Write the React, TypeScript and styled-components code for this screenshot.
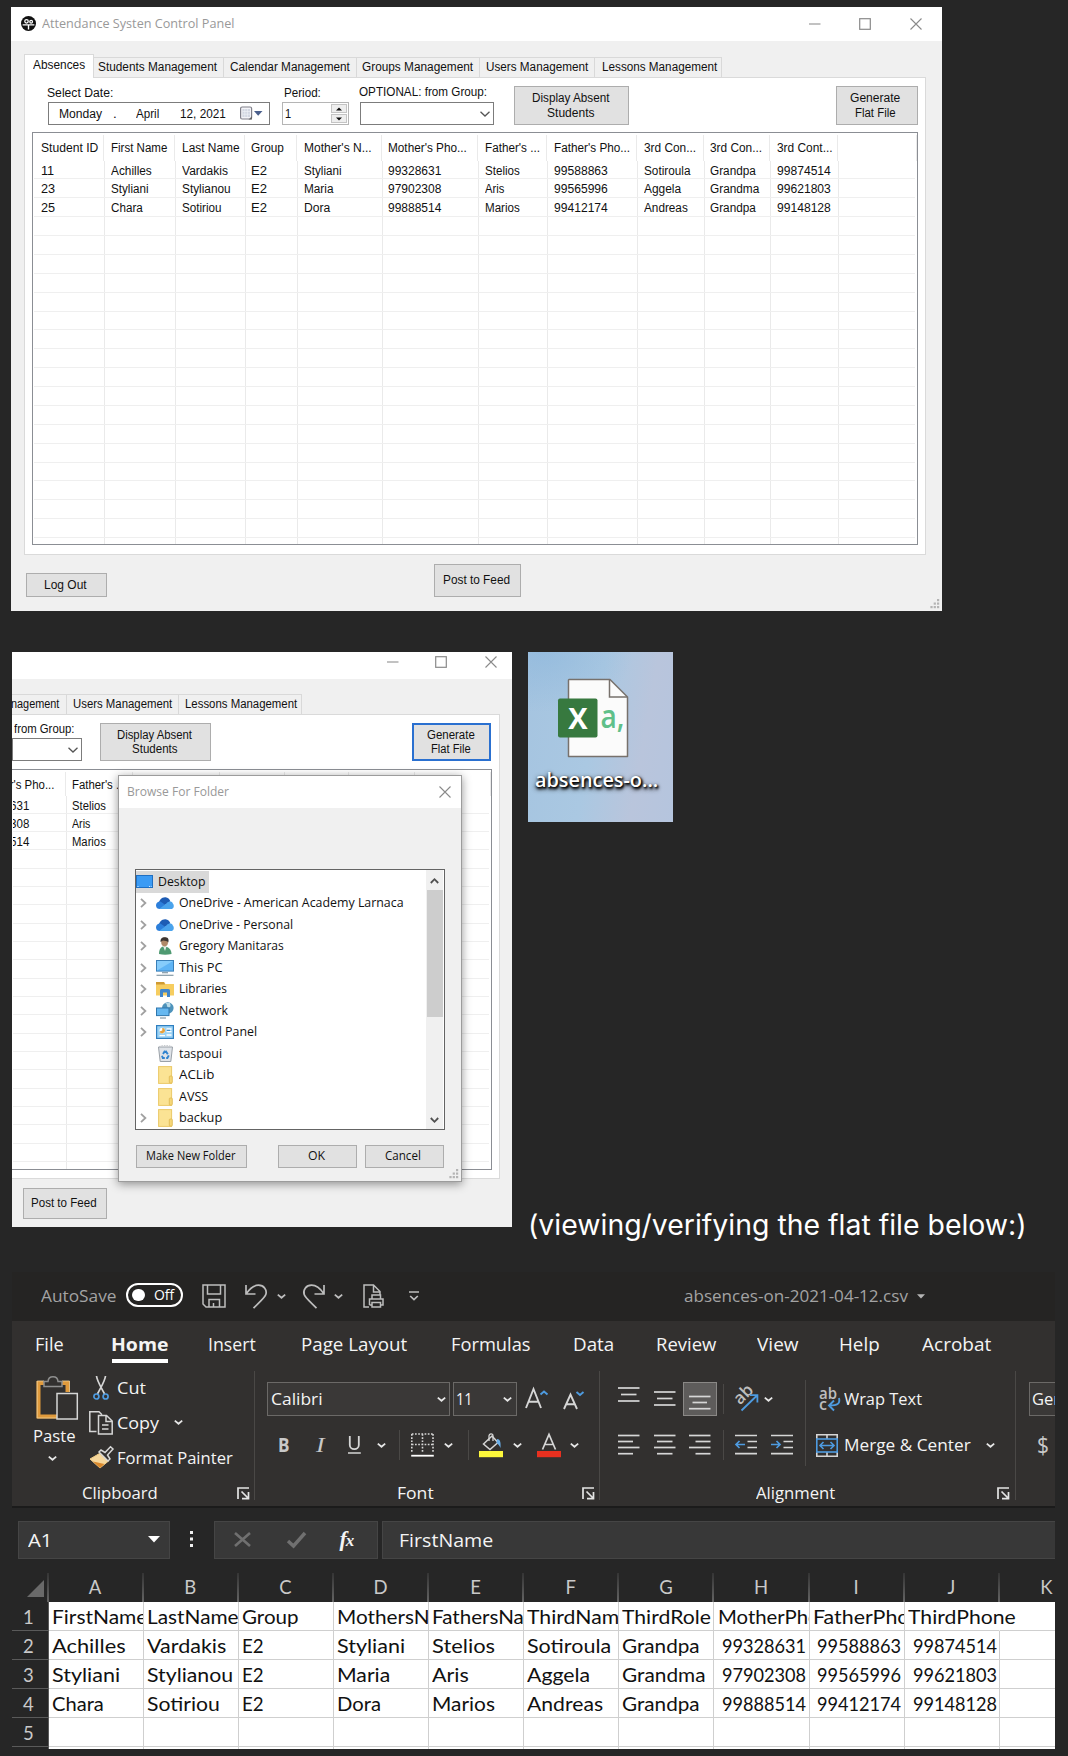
import React, { useLayoutEffect, useRef, useState } from "react";
import styled, { createGlobalStyle, css } from "styled-components";

const Global = createGlobalStyle`
  * { box-sizing: border-box; }
  html, body { margin: 0; padding: 0; background: #262626; }
  svg { display: block; flex: none; overflow: visible; }
`;

const SANS = `"Liberation Sans", Arial, sans-serif`;
const UI = `"Open Sans", "Noto Sans", sans-serif`;
const SHEET = `Lato, "Open Sans", sans-serif`;

/* ---------- text that keeps a given width ---------- */

const FitBox = styled.span<{ $w: number }>`
  display: inline-block;
  flex: none;
  width: ${(p) => p.$w}px;
  white-space: pre;
  text-align: left;
`;
const FitInner = styled.span`
  display: inline-block;
  margin-left: -0.9px;
  transform-origin: 0 50%;
`;

function T({ w, children }: { w: number; children: string }) {
  const ref = useRef<HTMLSpanElement>(null);
  const [scale, setScale] = useState(1);
  useLayoutEffect(() => {
    if (ref.current) setScale((w + 1.2) / ref.current.offsetWidth);
  }, [w, children]);
  return (
    <FitBox $w={w}>
      <FitInner ref={ref} style={{ transform: `scaleX(${scale})` }}>
        {children}
      </FitInner>
    </FitBox>
  );
}

/* ---------- page ---------- */

const Page = styled.main`
  width: 1068px;
  height: 1756px;
  padding: 7px 0 0 11px;
  overflow: hidden;
  background: #262626;
`;

const MiddleRow = styled.div`
  display: flex;
  height: 575px;
  margin: 41px 0 0 1px;
`;
const SideColumn = styled.div`
  display: flex;
  flex-direction: column;
  margin-left: 16px;
`;
const Caption = styled.p`
  margin: 385px 0 0 1px;
  font: 400 28px/36px Inter, ${SANS};
  color: #fff;
`;

/* ---------- classic window ---------- */

const Win = styled.section<{ $w: number; $h: number }>`
  position: relative;
  width: ${(p) => p.$w}px;
  height: ${(p) => p.$h}px;
  flex: none;
  overflow: hidden;
  background: #f0f0f0;
  color: #111;
  font: 12.5px/16px ${SANS};
`;
const TitleBar = styled.header<{ $h: number; $pr: number }>`
  display: flex;
  align-items: center;
  height: ${(p) => p.$h}px;
  padding: 0 ${(p) => p.$pr}px 1px 10px;
  background: #fff;
  color: #999;
  font: 12.5px/18px ${UI};
`;
const TitleText = styled.span`
  margin-left: 7px;
`;
const WinButtons = styled.div<{ $lift?: number }>`
  display: flex;
  align-items: center;
  margin-left: auto;
  padding-bottom: ${(p) => p.$lift ?? 0}px;
`;
const Tabs = styled.nav<{ $h: number; $ml: number }>`
  display: flex;
  align-items: flex-end;
  height: ${(p) => p.$h}px;
  padding-left: ${(p) => p.$ml}px;
`;
const Tab = styled.div<{ $w: number; $on?: boolean; $pl?: number }>`
  width: ${(p) => p.$w}px;
  height: 20px;
  padding-left: ${(p) => p.$pl ?? 6.5}px;
  border: 1px solid #d9d9d9;
  border-width: 1px 1px 0 0;
  overflow: hidden;
  line-height: 19px;
  ${(p) =>
    p.$on &&
    css`
      position: relative;
      height: 24px;
      margin-bottom: -1px;
      border-left-width: 1px;
      background: #fff;
      line-height: 21px;
    `}
`;
const Panel = styled.div<{ $ml: number; $w: number; $h: number }>`
  width: ${(p) => p.$w}px;
  height: ${(p) => p.$h}px;
  margin-left: ${(p) => p.$ml}px;
  border: 1px solid #dadada;
  background: #fff;
`;
const Tools = styled.div<{ $h: number }>`
  display: flex;
  align-items: flex-start;
  height: ${(p) => p.$h}px;
`;
const Field = styled.label<{ $ml: number; $pt?: number; $indent?: number }>`
  display: flex;
  flex-direction: column;
  margin-left: ${(p) => p.$ml}px;
  padding-top: ${(p) => p.$pt ?? 7}px;
  > span:first-child { margin-left: ${(p) => p.$indent ?? 0}px; }
`;
const Control = styled.div<{ $w: number; $mt?: number; $pl?: number; $light?: boolean; $h?: number }>`
  display: flex;
  align-items: center;
  width: ${(p) => p.$w}px;
  height: ${(p) => p.$h ?? 23}px;
  margin-top: ${(p) => p.$mt ?? 1}px;
  padding-left: ${(p) => p.$pl ?? 0}px;
  border: 1px solid ${(p) => (p.$light ? "#b5b5b5" : "#7c7c7c")};
  background: #fff;
`;
const Gap = styled.i<{ $w: number }>`
  flex: none;
  width: ${(p) => p.$w}px;
`;
const Spin = styled.div`
  display: flex;
  flex-direction: column;
  gap: 1px;
  width: 16px;
  height: 19px;
  margin: 0 1px 0 auto;
`;
const SpinKey = styled.div`
  display: grid;
  place-items: center;
  flex: 1;
  border: 1px solid #c4c4c4;
  background: #eee;
`;
const Button = styled.button<{ $w: number; $h: number; $ml?: number; $mt?: number; $focus?: boolean; $lh?: number }>`
  display: flex;
  flex-direction: column;
  align-items: center;
  justify-content: center;
  flex: none;
  width: ${(p) => p.$w}px;
  height: ${(p) => p.$h}px;
  margin: ${(p) => p.$mt ?? 0}px 0 0 ${(p) => p.$ml ?? 0}px;
  padding: 0 1.5px 0 0;
  border: ${(p) => (p.$focus ? "2px solid #2a70d0" : "1px solid #adadad")};
  background: #e1e1e1;
  color: #111;
  font: inherit;
  line-height: ${(p) => p.$lh ?? 14.5}px;
`;
const Footer = styled.footer`
  display: flex;
  align-items: flex-start;
`;
const GripBox = styled.div`
  position: absolute;
  right: 2px;
  bottom: 2px;
`;

/* ---------- list view ---------- */

const List = styled.div<{ $w: number; $h: number; $ml: number; $open?: boolean }>`
  width: ${(p) => p.$w}px;
  height: ${(p) => p.$h}px;
  margin-left: ${(p) => p.$ml}px;
  padding-right: 2px;
  border: 1.5px solid #8b8e94;
  border-left-width: ${(p) => (p.$open ? 0 : 1)}px;
  overflow: hidden;
`;
const ListHead = styled.div<{ $cols: string; $h: number }>`
  display: grid;
  grid-template-columns: ${(p) => p.$cols};
  height: ${(p) => p.$h}px;
  margin-top: 2px;
  line-height: 26px;
`;
const ListRow = styled.div<{ $cols: string; $h: number }>`
  display: grid;
  grid-template-columns: ${(p) => p.$cols};
  grid-template-rows: 100%;
  height: ${(p) => p.$h}px;
  margin-left: 1px;
  border-bottom: 1px solid #efefef;
  line-height: 21px;
`;
const Cell = styled.div<{ $pl: number }>`
  min-width: 0;
  padding-left: ${(p) => Math.max(p.$pl, 0)}px;
  border-right: 1px solid #eaeaea;
  overflow: hidden;
  > span { margin-left: ${(p) => Math.min(p.$pl, 0)}px; }
`;

type Txt = [string, number];
type ListProps = { cols: number[]; pads: number[]; head: Txt[]; rows: Txt[][]; total: number; headH: number; rowH: number };

function ListBody({ cols, pads, head, rows, total, headH, rowH }: ListProps) {
  const template = cols.map((c) => `${c}px`).join(" ");
  return (
    <>
      <ListHead $cols={template} $h={headH}>
        {cols.map((_, i) => (
          <Cell key={i} $pl={pads[i]}>{head[i] && <T w={head[i][1]}>{head[i][0]}</T>}</Cell>
        ))}
      </ListHead>
      {Array.from({ length: total }, (_, r) => (
        <ListRow key={r} $cols={template} $h={rowH}>
          {cols.map((_, i) => (
            <Cell key={i} $pl={pads[i] - 1}>
              {rows[r]?.[i] && <T w={rows[r][i][1]}>{rows[r][i][0]}</T>}
            </Cell>
          ))}
        </ListRow>
      ))}
    </>
  );
}

/* ---------- small drawings ---------- */

const MinIcon = () => <svg width="12" height="12"><path d="M0 6H11.5" stroke="#999" strokeWidth="1.2" /></svg>;
const MaxIcon = () => <svg width="12" height="12"><rect x="0.7" y="0.7" width="10.6" height="10.6" fill="none" stroke="#8a8a8a" strokeWidth="1.2" /></svg>;
const CloseIcon = () => <svg width="12" height="12"><path d="M.5.5L11.5 11.5M11.5.5L.5 11.5" stroke="#8a8a8a" strokeWidth="1.1" /></svg>;
const ComboArrow = () => <svg width="10" height="6"><path d="M.5.8L5 5L9.5.8" fill="none" stroke="#555" strokeWidth="1.3" /></svg>;
const Chevron = ({ c = "#e6e6e6" }: { c?: string }) => (
  <svg width="9" height="5"><path d="M.8.6L4.5 3.8L8.2.6" fill="none" stroke={c} strokeWidth="1.8" /></svg>
);
const Grip = () => (
  <svg width="10" height="10" fill="#b4b4b4">
    {[[7, 0], [3.7, 3.5], [7, 3.5], [0.4, 7], [3.7, 7], [7, 7]].map(([x, y]) => (
      <rect key={`${x}-${y}`} x={x} y={y} width="2.2" height="2.2" />
    ))}
  </svg>
);
const AppIcon = () => (
  <svg width="15" height="15" viewBox="0 0 24 24">
    <circle cx="12" cy="12" r="12" fill="#111" />
    <circle cx="8.8" cy="8.4" r="2.8" fill="none" stroke="#fff" strokeWidth="2" />
    <circle cx="16.2" cy="9" r="2.2" fill="none" stroke="#fff" strokeWidth="2" />
    <path d="M2.6 14.2H21.4M12 14.2V21.5" fill="none" stroke="#fff" strokeWidth="2.2" />
  </svg>
);
const CalendarIcon = () => (
  <svg width="23" height="15">
    <rect x="0.6" y="1" width="11" height="12" rx="1.5" fill="#f4f4f8" stroke="#80808a" strokeWidth="1.2" />
    <rect x="2.4" y="3" width="7.6" height="8" fill="#d3d7e2" />
    <path d="M2.5 5.5H10M2.5 8.2H10M4.8 3V11M7.4 3V11" stroke="#eef0f6" strokeWidth=".7" />
    <path d="M8.5 13.6L12 10.2V13.6Z" fill="#666" />
    <path d="M14 5H22.5L18.2 9.8Z" fill="#4a5f8c" />
  </svg>
);
const Triangle = ({ up }: { up?: boolean }) => (
  <svg width="6" height="4"><path d={up ? "M0 3.6L3 .4L6 3.6Z" : "M0 .4H6L3 3.6Z"} fill="#111" /></svg>
);

/* ---------- first window ---------- */

const COLS_A = [71, 71, 70, 52, 84.5, 96.7, 69, 89.7, 66.7, 66.8, 67.8, 79];
const PADS_A = [8.6, 7.8, 7.6, 7.2, 7.8, 7.8, 7.6, 7.6, 7.6, 7.4, 7.4, 0];
const HEAD_A: Txt[] = [["Student ID", 56], ["First Name", 55], ["Last Name", 56], ["Group", 32], ["Mother's N...", 66], ["Mother's Pho...", 78], ["Father's ...", 54], ["Father's Pho...", 75], ["3rd Con...", 51], ["3rd Con...", 51], ["3rd Cont...", 54]];
const ROWS_A: Txt[][] = [
  [["11", 12], ["Achilles", 39.5], ["Vardakis", 45], ["E2", 14.5], ["Styliani", 36], ["99328631", 52.5], ["Stelios", 34], ["99588863", 53], ["Sotiroula", 45], ["Grandpa", 45], ["99874514", 53]],
  [["23", 13], ["Styliani", 36], ["Stylianou", 47], ["E2", 14.5], ["Maria", 28], ["97902308", 52.5], ["Aris", 18.5], ["99565996", 53], ["Aggela", 36], ["Grandma", 48], ["99621803", 53]],
  [["25", 13], ["Chara", 30.5], ["Sotiriou", 38], ["E2", 14.5], ["Dora", 25], ["99888514", 52.5], ["Marios", 34], ["99412174", 53], ["Andreas", 43], ["Grandpa", 45], ["99148128", 53]],
];

const ControlPanel = () => (
  <Win $w={931} $h={604}>
    <TitleBar $h={34} $pr={20}>
      <AppIcon />
      <TitleText><T w={191}>Attendance Systen Control Panel</T></TitleText>
      <WinButtons><MinIcon /><Gap $w={37.5} /><MaxIcon /><Gap $w={39.5} /><CloseIcon /></WinButtons>
    </TitleBar>
    <Tabs $h={36} $ml={13}>
      <Tab $w={70} $on $pl={8.5}><T w={51}>Absences</T></Tab>
      <Tab $w={130} $pl={5}><T w={118}>Students Management</T></Tab>
      <Tab $w={132.5}><T w={118.5}>Calendar Management</T></Tab>
      <Tab $w={123.5}><T w={109.5}>Groups Management</T></Tab>
      <Tab $w={115}><T w={101}>Users Management</T></Tab>
      <Tab $w={127} $pl={7.5}><T w={114}>Lessons Management</T></Tab>
    </Tabs>
    <Panel $ml={13} $w={902} $h={478}>
      <Tools $h={54}>
        <Field $ml={23}>
          <T w={65}>Select Date:</T>
          <Control $w={222} $pl={11}>
            <T w={41.5}>Monday</T><Gap $w={12} /><T w={2}>.</T><Gap $w={21} />
            <T w={22}>April</T><Gap $w={22} /><T w={45}>12, 2021</T><Gap $w={14} />
            <CalendarIcon />
          </Control>
        </Field>
        <Field $ml={12} $indent={3}>
          <T w={36}>Period:</T>
          <Control $w={67} $light $pl={3}>
            <T w={5}>1</T>
            <Spin><SpinKey><Triangle up /></SpinKey><SpinKey><Triangle /></SpinKey></Spin>
          </Control>
        </Field>
        <Field $ml={11} $pt={6}>
          <T w={127}>OPTIONAL: from Group:</T>
          <Control $w={134} $pl={118.5} $mt={2}><ComboArrow /></Control>
        </Field>
        <Button $w={115} $h={39} $ml={20} $mt={8}>
          <T w={76.5}>Display Absent</T><T w={46}>Students</T>
        </Button>
        <Button $w={82} $h={39} $ml={206.5} $mt={8}>
          <T w={49}>Generate</T><T w={39}>Flat File</T>
        </Button>
      </Tools>
      <List $w={886} $h={413} $ml={7}>
        <ListBody cols={COLS_A} pads={PADS_A} head={HEAD_A} rows={ROWS_A} total={21} headH={25.5} rowH={18.88} />
      </List>
    </Panel>
    <Footer>
      <Button $w={81} $h={24} $ml={15} $mt={18}><T w={41}>Log Out</T></Button>
      <Button $w={87} $h={33} $ml={327} $mt={9}><T w={66}>Post to Feed</T></Button>
    </Footer>
    <GripBox><Grip /></GripBox>
  </Win>
);

/* ---------- browse dialog ---------- */

const Dialog = styled.section`
  position: absolute;
  left: 106px;
  top: 123px;
  width: 344px;
  height: 407px;
  border: 1px solid #9c9c9c;
  background: #f0f0f0;
  box-shadow: 0 2px 9px rgba(0, 0, 0, 0.42);
  font: 12.5px/16px ${UI};
  color: #111;
`;
const DialogTitle = styled.header`
  display: flex;
  align-items: center;
  justify-content: space-between;
  height: 32px;
  padding: 0 10px 0 8.5px;
  background: #fff;
  color: #999;
`;
const Tree = styled.div`
  display: flex;
  width: 310px;
  height: 261px;
  margin: 61px 0 0 16px;
  border: 1px solid #646464;
  background: #fff;
  overflow: hidden;
`;
const TreeItems = styled.div`
  flex: 1;
  padding-top: 1px;
`;
const TreeRow = styled.div`
  display: flex;
  align-items: center;
  height: 21.53px;
`;
const TreeRoot = styled(TreeRow)`
  gap: 5.5px;
  width: 73px;
  background: #d9d9d9;
`;
const Twist = styled.div`
  width: 20px;
  padding-left: 4px;
`;
const TreeIcon = styled.div`
  display: grid;
  place-items: center;
  width: 18px;
  margin-right: 5.5px;
`;
const ScrollTrack = styled.div`
  display: flex;
  flex-direction: column;
  align-items: center;
  width: 17px;
  margin-right: 1px;
  padding: 8px 0 6px;
  background: #f0f0f0;
`;
const ScrollThumb = styled.div`
  width: 16px;
  height: 127px;
  margin: 6px 0 auto;
  background: #cdcdcd;
`;
const DialogButtons = styled.div`
  display: flex;
  margin: 15px 0 0 17px;
`;

const Cloud = () => (
  <svg width="18" height="12" viewBox="0 0 18 12">
    <path d="M3 8C2 3.5 6 0 9.5 .3C12 .5 13.6 2.4 14.3 4.2L9 8Z" fill="#1d5cb4" />
    <path d="M0 8.4C0 6 2 4.5 4.4 4.6L11 9L4 12C1.6 12 0 10.6 0 8.4Z" fill="#2c7fdb" />
    <path d="M3.4 11.8L10.5 6.5C12 4 16 3.8 16.8 6.4C18.8 8.6 17.6 12 15 12H4Z" fill="#4aa3ec" />
  </svg>
);
const Person = () => (
  <svg width="14" height="18" viewBox="0 0 14 18">
    <path d="M1 17C1 12 3 9.5 6 9.5C10 9.5 13.5 12 13.5 17Q7 18.5 1 17Z" fill="#4f9a72" />
    <path d="M5 9L7 14L8.5 9.5Z" fill="#e8efe9" />
    <ellipse cx="6.6" cy="5" rx="3.4" ry="4.4" fill="#b08968" />
    <path d="M2.6 5C2 1 5 0 7.5.3C10.6.5 11 3 10.3 5.6C9.5 3.6 7 3.6 5 3.4Z" fill="#3c3531" />
  </svg>
);
const Pc = () => (
  <svg width="18" height="16" viewBox="0 0 18 16">
    <rect x=".5" y=".5" width="17" height="10.6" fill="#5fb4f5" stroke="#3a7fb8" />
    <path d="M1 10.6V1H17Z" fill="#86ccfb" />
    <path d="M6 12.8H12M.5 15.3H17.5" stroke="#6c8594" strokeWidth="1.1" />
  </svg>
);
const Libraries = () => (
  <svg width="18" height="15" viewBox="0 0 18 15">
    <path d="M0 0H8L9.5 2H18V13.5H0Z" fill="#f6cd60" />
    <path d="M0 0H8L9 2.5H0Z" fill="#cf9a32" />
    <path d="M4 15V9C4 7 5 7 6 7H12C14 7 14 8 14 9V15H11V10.5H7V15Z" fill="#3f86cc" />
  </svg>
);
const Network = () => (
  <svg width="18" height="17" viewBox="0 0 18 17">
    <circle cx="11.8" cy="6" r="5.8" fill="#4e93bb" />
    <path d="M9 1C12 2 10 5 12.5 5.5C16 5 14 2 14 1Z" fill="#b9dbe8" />
    <rect x=".5" y="6" width="12.5" height="7.6" fill="#66b8f0" stroke="#2f77ad" />
    <path d="M4 16H10" stroke="#6c8594" />
  </svg>
);
const ControlIcon = () => (
  <svg width="18" height="14" viewBox="0 0 18 14">
    <rect x=".6" y=".6" width="16.8" height="12.8" fill="#9bd3f5" stroke="#2f7fc0" strokeWidth="1.2" />
    <circle cx="6.3" cy="5.6" r="2.8" fill="#fff" />
    <path d="M6.3 5.6V2.8A2.8 2.8 0 1 1 3.6 6.4Z" fill="#e8a13a" />
    <path d="M10.5 4H15.5M10.5 6.6H15.5M3.5 10.6H9M10.5 10H15.5" stroke="#fff" strokeWidth="1.4" />
    <path d="M11 5.3H14" stroke="#2f7fc0" />
  </svg>
);
const Bin = () => (
  <svg width="15" height="17" viewBox="0 0 15 17">
    <path d="M.5 2L2.2 16.5H12.8L14.5 2Z" fill="#dfe3e8" stroke="#9aa1a8" />
    <path d="M1 1.6C4 .2 11 .2 14 1.6" fill="none" stroke="#c2c6ca" strokeDasharray="1.5 1" />
    <path d="M7.5 5.8L9.8 9.3M10.8 10.4L9.4 13H8.2M6.8 13H4.8L4 10.7M5 9L7 5.8" fill="none" stroke="#2f83cf" strokeWidth="1.9" />
  </svg>
);
const Folder = () => (
  <svg width="15" height="18" viewBox="0 0 15 18">
    <rect x=".6" y=".6" width="13" height="16.8" fill="#fbe394" stroke="#ecc968" />
    <rect x="11.3" y="10" width="3" height="7" rx=".8" fill="#f6d778" stroke="#deb750" strokeWidth=".8" />
  </svg>
);
const DesktopIcon = () => (
  <svg width="17" height="13"><rect x=".5" y=".5" width="16" height="12" fill="#3b9bf4" stroke="#1f6fc2" /><path d="M1.5 11.5H15.5" stroke="#d7ecff" strokeDasharray="1 10.5 1 .8 1" /></svg>
);

const TREE: [string, number, () => React.ReactElement, boolean][] = [
  ["OneDrive - American Academy Larnaca", 223.5, Cloud, true],
  ["OneDrive - Personal", 112.5, Cloud, true],
  ["Gregory Manitaras", 104, Person, true],
  ["This PC", 42, Pc, true],
  ["Libraries", 47, Libraries, true],
  ["Network", 48, Network, true],
  ["Control Panel", 77, ControlIcon, true],
  ["taspoui", 41.5, Bin, false],
  ["ACLib", 34, Folder, false],
  ["AVSS", 28, Folder, false],
  ["backup", 41.5, Folder, true],
];

const BrowseDialog = () => (
  <Dialog>
    <DialogTitle><T w={101}>Browse For Folder</T><CloseIcon /></DialogTitle>
    <Tree>
      <TreeItems>
        <TreeRoot><DesktopIcon /><T w={46}>Desktop</T></TreeRoot>
        {TREE.map(([name, w, Icon, open]) => (
          <TreeRow key={name}>
            <Twist>{open && <svg width="7" height="10"><path d="M1 .8L5.4 5L1 9.2" fill="none" stroke="#a0a0a0" strokeWidth="1.8" /></svg>}</Twist>
            <TreeIcon><Icon /></TreeIcon>
            <T w={w}>{name}</T>
          </TreeRow>
        ))}
      </TreeItems>
      <ScrollTrack>
        <svg width="9" height="6"><path d="M.8 5L4.5 1.2L8.2 5" fill="none" stroke="#505050" strokeWidth="1.8" /></svg>
        <ScrollThumb />
        <svg width="9" height="6"><path d="M.8 1L4.5 4.8L8.2 1" fill="none" stroke="#505050" strokeWidth="1.8" /></svg>
      </ScrollTrack>
    </Tree>
    <DialogButtons>
      <Button $w={111} $h={23}><T w={88}>Make New Folder</T></Button>
      <Button $w={79} $h={23} $ml={31}><T w={15.5}>OK</T></Button>
      <Button $w={79} $h={23} $ml={8}><T w={35}>Cancel</T></Button>
    </DialogButtons>
    <GripBox><Grip /></GripBox>
  </Dialog>
);

/* ---------- second window ---------- */

const OpenEnd = styled.div`
  margin-left: -1px;
`;
const COLS_B = [54, 66.5, 87.5, 64.5, 64.5, 66, 76];
const PADS_B = [-33.2, 7, 6, 6, 6, 6, 0];
const HEAD_B: Txt[] = [["Mother's Pho...", 75.5], ["Father's ...", 52.5]];
const ROWS_B: Txt[][] = [
  [["99328631", 50.5], ["Stelios", 33]],
  [["97902308", 50.5], ["Aris", 17.5]],
  [["99888514", 50.5], ["Marios", 33]],
];

const CroppedPanel = () => (
  <Win $w={500} $h={575}>
    <TitleBar $h={27} $pr={15.5}>
      <WinButtons $lift={6}><MinIcon /><Gap $w={36} /><MaxIcon /><Gap $w={37.5} /><CloseIcon /></WinButtons>
    </TitleBar>
    <Tabs $h={35} $ml={0}>
      <Tab $w={55} $pl={0}><T w={47.5}>nagement</T></Tab>
      <Tab $w={112}><T w={98}>Users Management</T></Tab>
      <Tab $w={123}><T w={111}>Lessons Management</T></Tab>
    </Tabs>
    <OpenEnd>
      <Panel $ml={0} $w={489} $h={465}>
        <Tools $h={53.5}>
          <Field $ml={0} $pt={6} $indent={2.5}>
            <T w={59.5}>from Group:</T>
            <Control $w={70} $pl={54.5} $mt={1} $h={23}><ComboArrow /></Control>
          </Field>
          <Button $w={111} $h={38} $ml={18} $mt={8}>
            <T w={74}>Display Absent</T><T w={44}>Students</T>
          </Button>
          <Button $w={79} $h={38} $ml={201} $mt={8} $focus $lh={14}>
            <T w={46.5}>Generate</T><T w={38}>Flat File</T>
          </Button>
        </Tools>
        <List $w={480} $h={401} $ml={0} $open>
          <ListBody cols={COLS_B} pads={PADS_B} head={HEAD_B} rows={ROWS_B} total={21} headH={24} rowH={18.33} />
        </List>
      </Panel>
    </OpenEnd>
    <Footer>
      <Button $w={84} $h={31} $ml={10.5} $mt={9}><T w={64.5}>Post to Feed</T></Button>
    </Footer>
    <BrowseDialog />
  </Win>
);

/* ---------- desktop file ---------- */

const Tile = styled.figure`
  display: flex;
  flex-direction: column;
  align-items: center;
  flex: none;
  width: 145px;
  height: 170px;
  margin: 0;
  padding: 26px 11px 0 0;
  background:
    radial-gradient(90px 60px at 10% 0%, rgba(140, 183, 220, 0.6), transparent),
    linear-gradient(100deg, #a5c4e0 0%, #aac8e2 45%, #b9c5dc 75%, #b5c5de 100%);
`;
const FileName = styled.figcaption`
  margin: 9px 0 0 4px;
  color: #fff;
  font: 600 19px/26px ${UI};
  text-shadow: 1px 2px 3px #000, 1px 1px 2px #000, 0 2px 5px #222;
`;

const DesktopFile = () => (
  <Tile>
    <svg width="84" height="80" viewBox="0 0 84 80">
      <path d="M16 1.5H57L74.5 19V78.5H15.5V2Z" fill="#fbfbfb" stroke="#77716c" strokeWidth="1.5" strokeLinejoin="round" />
      <path d="M56.5 2V19H74" fill="none" stroke="#77716c" strokeWidth="1.5" />
      <rect x="5" y="20.5" width="39.5" height="39" rx="2" fill="#37793f" />
      <text x="24.8" y="50.5" textAnchor="middle" fontFamily="Open Sans" fontWeight="700" fontSize="29" fill="#fff">X</text>
      <text x="47.5" y="49.5" fontFamily="Open Sans" fontWeight="600" fontSize="33" fill="#5fc08a" textLength="24" lengthAdjust="spacingAndGlyphs">a,</text>
    </svg>
    <FileName><T w={122}>absences-o...</T></FileName>
  </Tile>
);

/* ---------- spreadsheet ---------- */

const Excel = styled.section`
  width: 1043px;
  height: 477px;
  margin: 45px 0 0 1px;
  overflow: hidden;
  background: #262626;
  color: #f4f4f4;
  font: 17px/22px ${UI};
`;
const QuickBar = styled.header`
  display: flex;
  align-items: center;
  height: 49px;
  padding: 0 0 1px 30px;
  background: #252423;
  color: #a3a3a3;
`;
const Toggle = styled.div`
  display: flex;
  align-items: center;
  gap: 10px;
  width: 57px;
  height: 24px;
  margin: 0 18.5px 2px 10px;
  padding-left: 4px;
  border: 2px solid #fff;
  border-radius: 12px;
  color: #fff;
  font-size: 14.5px;
`;
const Knob = styled.i`
  width: 12.5px;
  height: 12.5px;
  border-radius: 50%;
  background: #fff;
`;
const Menu = styled.nav`
  display: flex;
  height: 46px;
  background: #32302f;
  font-size: 18px;
  line-height: 46px;
`;
const MenuItem = styled.div<{ $ml: number; $on?: boolean }>`
  height: 42px;
  margin-left: ${(p) => p.$ml}px;
  ${(p) =>
    p.$on &&
    css`
      font-weight: 700;
      border-bottom: 4px solid #fff;
    `}
`;
const Ribbon = styled.div`
  display: flex;
  height: 139px;
  background: #32302f;
`;
const Group = styled.div<{ $w: number }>`
  display: flex;
  flex-direction: column;
  flex: none;
  width: ${(p) => p.$w}px;
  height: 129px;
  margin-top: 4px;
  border-right: 1px solid #4a4846;
`;
const GroupBody = styled.div`
  display: flex;
  flex: none;
  height: 109px;
`;
const GroupFoot = styled.div<{ $pl: number }>`
  display: flex;
  align-items: center;
  flex: none;
  height: 26px;
  padding: 0 4.5px 0 ${(p) => p.$pl}px;
  font-size: 16px;
  > svg { margin: 0 0 0 auto; }
`;
const PasteColumn = styled.div`
  display: flex;
  flex-direction: column;
  width: 77px;
  padding: 5px 0 0 22px;
  > span { margin-top: 6px; line-height: 20px; }
  > svg:first-child { margin-left: 3px; }
  > svg:last-child { margin: 10px 0 0 14px; }
`;
const Commands = styled.div`
  display: flex;
  flex-direction: column;
  margin-top: -1px;
`;
const Command = styled.div`
  display: flex;
  align-items: center;
  flex: none;
  height: 35px;
  > svg:last-child { margin-left: 15px; }
`;
const CommandIcon = styled.div`
  display: grid;
  place-items: center;
  width: 24px;
  height: 24px;
  margin-right: 5px;
`;
const Stack = styled.div`
  display: flex;
  flex-direction: column;
`;
const ToolRow = styled.div<{ $h: number; $mt: number; $pl: number }>`
  display: flex;
  align-items: center;
  height: ${(p) => p.$h}px;
  margin-top: ${(p) => p.$mt}px;
  padding-left: ${(p) => p.$pl}px;
`;
const Picker = styled.div<{ $w: number }>`
  display: flex;
  align-items: center;
  justify-content: space-between;
  flex: none;
  width: ${(p) => p.$w}px;
  height: 34px;
  padding: 0 3.5px;
  border: 1.5px solid #6b6967;
  background: #3a3837;
`;
const Rule = styled.i<{ $h?: number }>`
  flex: none;
  width: 1px;
  height: ${(p) => p.$h ?? 30}px;
  background: #4a4846;
`;
const Glyph = styled.span<{ $size: number; $bold?: boolean; $serif?: boolean }>`
  display: block;
  color: #c8c8c8;
  font-size: ${(p) => p.$size}px;
  font-weight: ${(p) => (p.$bold ? 700 : 400)};
  line-height: 24px;
  ${(p) => p.$serif && css`font-family: "Liberation Serif", serif; font-style: italic;`}
`;
const Pressed = styled.div`
  display: grid;
  place-items: center;
  width: 34px;
  height: 34px;
  padding-top: 7px;
  border: 1.5px solid #8a8886;
  background: #5e5c5b;
`;

const S = "#d6d6d6";
const Q = "#bdbdbd";
const B = "#4e9be0";

const Lines = ({ rows }: { rows: [number, number, number][] }) => (
  <svg width="22" height="22" stroke={S} strokeWidth="1.7">
    {rows.map(([y, a, b]) => <path key={y} d={`M${a} ${y}H${b}`} />)}
  </svg>
);
const Launcher = () => (
  <svg width="13" height="13"><path d="M1 12V1H12M4.5 4.5L11 11M11.5 5V11.7H5" fill="none" stroke="#e4e4e4" strokeWidth="1.7" /></svg>
);
const SaveIcon = () => (
  <svg width="24" height="24" fill="none" stroke={Q} strokeWidth="1.5"><path d="M1 1H23V23H4L1 20ZM5.5 1V10H18.5V1M7 23V15.5H17.5V23M11.5 19V23" /></svg>
);
const UndoIcon = ({ flip }: { flip?: boolean }) => (
  <svg width="22" height="25" fill="none" stroke={Q} strokeWidth="1.7">
    <path transform={flip ? "translate(22 0) scale(-1 1)" : undefined} d="M1 1V10H10.5M1.2 9.8C5 4 9 1.2 13.5 1.2C19 1.2 22.3 6 20.8 10.5C20 13.5 14 18.5 8.5 24.2" />
  </svg>
);
const PrintIcon = () => (
  <svg width="21" height="24" fill="none" stroke={Q} strokeWidth="1.5">
    <path d="M6 23H1V1H10.5L17 7.5V11M10.5 1V8H17M9 15V11H17.5V15M6.5 21V15H20V21H17.5M9 21H6.5M9 18.5H17.5V23H9Z" />
  </svg>
);
const PasteIcon = () => (
  <svg width="41" height="44" fill="none">
    <path d="M7 7H1.5V40.5H20M24 7H30.5V16" stroke="#e09a3c" strokeWidth="4" />
    <path d="M7 5H.2V42H20M25 5H32.5V16" stroke="#f3d39a" strokeWidth=".8" />
    <path d="M7 10.5V5.5H11C11.5 -.8 20.5 -.8 21 5.5H25V10.5Z" fill="#32302f" stroke="#8e8e8e" strokeWidth="1.5" />
    <rect x="20" y="17.5" width="20.3" height="25.5" fill="#32302f" stroke={S} strokeWidth="1.5" />
  </svg>
);
const CutIcon = () => (
  <svg width="16" height="24" fill="none" strokeWidth="1.7">
    <path d="M3.5 0C4 5 8 11 11.6 18M12.5 0C12 5 8 11 4.4 18" stroke={S} />
    <circle cx="3.4" cy="20.5" r="2.5" stroke={B} /><circle cx="12.6" cy="20.5" r="2.5" stroke={B} />
  </svg>
);
const CopyIcon = () => (
  <svg width="24" height="24" fill="none" stroke={S} strokeWidth="1.5">
    <path d="M7.5 20.5H.8V.8H10L13 3.8" /><path d="M9.5 4.5H17.5L23.2 10V23H9.5ZM17 5V10.5H23M13 14H19.5M13 18H19.5" />
  </svg>
);
const PainterIcon = () => (
  <svg width="25" height="23" fill="none">
    <path d="M1 13L10.5 7.5L19.5 15L11 22Z" fill="#f6d79c" stroke="#f1cd87" />
    <path d="M4 15.5L15.5 18L11 22Z" fill="#d9882d" />
    <path d="M10 6L12 4L16 6.5L21.5 0.8L24 3L18.5 9L21 13L19 15Z" fill="#32302f" stroke={S} strokeWidth="1.5" />
  </svg>
);
const BordersIcon = () => (
  <svg width="23" height="24" fill="none" stroke={S} strokeWidth="1.6">
    <path d="M.8 1H22.5M.8 1V20M22 1V20M11.5 1V20M.8 11.5H22" strokeDasharray="1.7 1.5" /><path d="M.2 22.7H22.8" stroke="#fff" strokeWidth="1.8" />
  </svg>
);
const FillIcon = () => (
  <svg width="24" height="24" fill="none">
    <path d="M4.5 11L13 3L19 9.5L11 16.5Z" stroke={S} strokeWidth="1.5" /><path d="M10 8V3C10 .2 14 .2 14 3V8" stroke={S} strokeWidth="1.3" />
    <path d="M18 6C21 6 22 9 21.5 15C20 12 19 11 17.5 10Z" fill="#6aaee8" /><rect y="18" width="24" height="6.2" fill="#fdf73b" />
  </svg>
);
const FontColorIcon = () => (
  <svg width="24" height="24" fill="none"><path d="M5.5 16.5L12 1.5L18.5 16.5M7.6 11.5H16.4" stroke={S} strokeWidth="1.7" /><rect y="18" width="24" height="6.2" fill="#e8301f" /></svg>
);
const GrowIcon = ({ small }: { small?: boolean }) => (
  <svg width="22" height="21" fill="none" strokeWidth="1.9">
    {small ? <path d="M1 20L7.5 5.5L14 20M3.2 15.3H11.8" stroke={S} /> : <path d="M1 19L8.5 0L16 19M3.6 12.8H13.4" stroke={S} />}
    {small ? <path d="M13.5 3L17 6L20.5 3" stroke={B} /> : <path d="M15.5 5.5L19 2.5L22.5 5.5" stroke={B} />}
  </svg>
);
const OrientIcon = () => (
  <svg width="25" height="23" fill="none">
    <text x="0" y="0" transform="translate(6 17.5) rotate(-45)" fontFamily="Open Sans" fontSize="17" fontWeight="600" fill={Q}>ab</text>
    <path d="M7.5 22.5L23 7.5M16 7.2H23.4V14.5" stroke={B} strokeWidth="1.8" />
  </svg>
);
const WrapIcon = () => (
  <svg width="22" height="24" fill="none">
    <text x="0" y="11.5" fontFamily="Open Sans" fontSize="16" fontWeight="600" fill={Q} textLength="18" lengthAdjust="spacingAndGlyphs">ab</text>
    <text x="0" y="22.5" fontFamily="Open Sans" fontSize="16" fontWeight="600" fill={Q}>c</text>
    <path d="M20 11C21.5 17 18 18.5 10.5 18.5M15 13.5L10 18.5L15 23.5" stroke={B} strokeWidth="1.9" />
  </svg>
);
const MergeIcon = () => (
  <svg width="22" height="23" fill="none" strokeWidth="1.6">
    <path d="M.8 5V.8H21.2V5M11 .8V5M.8 18V22.2H21.2V18M11 18V22.2" stroke={S} />
    <rect x=".8" y="5" width="20.4" height="13" stroke={B} /><path d="M4 11.5H18M7.5 8L4 11.5L7.5 15M14.5 8L18 11.5L14.5 15" stroke={B} />
  </svg>
);
const IndentIcon = ({ inc }: { inc?: boolean }) => (
  <svg width="22" height="22" fill="none" strokeWidth="1.7">
    <path d="M0 1.5H22M12.5 7.5H22M12.5 13.5H22M0 19.7H22" stroke={S} />
    <path d={inc ? "M0 10.5H9M5.5 7L9 10.5L5.5 14" : "M10 10.5H1M4.5 7L1 10.5L4.5 14"} stroke={B} />
  </svg>
);

const FormulaRow = styled.div`
  display: flex;
  height: 67px;
  padding: 12.5px 0 0 5.5px;
  border-top: 2px solid #1b1b1b;
  font-size: 18px;
`;
const FormulaBox = styled.div<{ $w: number; $pl: number }>`
  display: flex;
  align-items: center;
  flex: none;
  width: ${(p) => p.$w}px;
  height: 38px;
  padding-left: ${(p) => p.$pl}px;
  border: 1.5px solid #454545;
  background: #383838;
`;
const Dots = styled.div`
  display: grid;
  place-items: center;
  flex: none;
  width: 44px;
  height: 38px;
`;
const Fx = styled.span`
  font: italic 700 22px/24px "Liberation Serif", serif;
  letter-spacing: -1px;
  > small { font-size: 17px; }
`;

const Sheet = styled.div`
  width: 1140px;
  color: #111;
  font: 18.5px/28px ${SHEET};
`;
const SheetRow = styled.div<{ $head?: boolean }>`
  display: grid;
  grid-template-columns: 36.5px repeat(11, 95.15px);
  grid-template-rows: 100%;
  height: ${(p) => (p.$head ? 28.5 : 29.12)}px;
`;
const ColHead = styled.div`
  border-right: 2px solid;
  border-image: linear-gradient(#333, #666) 1;
  color: #c9c9c9;
  text-align: center;
  line-height: 28px;
`;
const Corner = styled(ColHead)`
  padding: 7px 0 0 14.5px;
`;
const RowHead = styled.div`
  padding-right: 3px;
  border-right: 1px solid #5a5a5a;
  border-bottom: 1px solid #5a5a5a;
  background: #262626;
  color: #c9c9c9;
  line-height: 30px;
  text-align: center;
`;
const SheetCell = styled.div<{ $right?: boolean; $spill?: boolean }>`
  position: ${(p) => (p.$spill ? "relative" : "static")};
  z-index: ${(p) => (p.$spill ? 1 : 0)};
  padding: 1px 2.5px 0 4px;
  overflow: ${(p) => (p.$spill ? "visible" : "hidden")};
  white-space: nowrap;
  text-align: ${(p) => (p.$right ? "right" : "left")};
  background: #fff;
  border: solid #cfcfcf;
  border-width: 0 1.5px 1.5px 0;
  ${(p) => p.$spill && css`border-right-color: #fff;`}
`;

const SHEET_ROWS: Txt[][] = [
  [["FirstName", 94], ["LastName", 90], ["Group", 55.5], ["MothersName", 129], ["FathersName", 118], ["ThirdName", 102], ["ThirdRole", 88], ["MotherPhone", 122], ["FatherPhone", 118], ["ThirdPhone", 106.5]],
  [["Achilles", 72], ["Vardakis", 78], ["E2", 20], ["Styliani", 67.5], ["Stelios", 61.5], ["Sotiroula", 82.5], ["Grandpa", 76], ["99328631", 83], ["99588863", 83], ["99874514", 83]],
  [["Styliani", 67.5], ["Stylianou", 85], ["E2", 20], ["Maria", 51.5], ["Aris", 36], ["Aggela", 62], ["Grandma", 82], ["97902308", 83], ["99565996", 83], ["99621803", 83]],
  [["Chara", 51], ["Sotiriou", 72], ["E2", 20], ["Dora", 42.5], ["Marios", 62], ["Andreas", 75.5], ["Grandpa", 76], ["99888514", 83], ["99412174", 83], ["99148128", 83]],
  [],
  [],
];

const MENU: [string, number, number][] = [
  ["File", 24, 28], ["Home", 47.5, 56], ["Insert", 41, 47], ["Page Layout", 46.7, 105], ["Formulas", 44.8, 78],
  ["Data", 44, 39.5], ["Review", 43.8, 59.3], ["View", 41.4, 40], ["Help", 42, 39.5], ["Acrobat", 43.3, 68.5],
];

const Spreadsheet = () => (
  <Excel>
    <QuickBar>
      <T w={74}>AutoSave</T>
      <Toggle><Knob /><T w={19}>Off</T></Toggle>
      <SaveIcon /><Gap $w={19.5} />
      <UndoIcon /><Gap $w={9.5} /><Chevron c={Q} /><Gap $w={17.5} />
      <UndoIcon flip /><Gap $w={9} /><Chevron c={Q} /><Gap $w={19.5} />
      <PrintIcon /><Gap $w={25.5} />
      <svg width="10" height="10"><path d="M0 1H10M1.2 5L5 8.6L8.8 5" fill="none" stroke={Q} strokeWidth="1.7" /></svg>
      <Gap $w={265.5} />
      <T w={222.5}>absences-on-2021-04-12.csv</T><Gap $w={9.5} />
      <svg width="8" height="5"><path d="M0 .3H8L4 4.6Z" fill="#b5b5b5" /></svg>
    </QuickBar>
    <Menu>
      {MENU.map(([name, ml, w]) => (
        <MenuItem key={name} $ml={ml} $on={name === "Home"}><T w={w}>{name}</T></MenuItem>
      ))}
    </Menu>
    <Ribbon>
      <Group $w={243}>
        <GroupBody>
          <PasteColumn><PasteIcon /><T w={41}>Paste</T><Chevron /></PasteColumn>
          <Commands>
            <Command><CommandIcon><CutIcon /></CommandIcon><T w={27.5}>Cut</T></Command>
            <Command><CommandIcon><CopyIcon /></CommandIcon><T w={41}>Copy</T><Chevron /></Command>
            <Command><CommandIcon><PainterIcon /></CommandIcon><T w={115}>Format Painter</T></Command>
          </Commands>
        </GroupBody>
        <GroupFoot $pl={70.5}><T w={75}>Clipboard</T><Launcher /></GroupFoot>
      </Group>
      <Group $w={345}>
        <GroupBody>
          <Stack>
            <ToolRow $h={34} $mt={11} $pl={12}>
              <Picker $w={183}><T w={50}>Calibri</T><Chevron /></Picker><Gap $w={2.5} />
              <Picker $w={64}><T w={15}>11</T><Chevron /></Picker><Gap $w={8.5} />
              <GrowIcon /><Gap $w={15.5} /><GrowIcon small />
            </ToolRow>
            <ToolRow $h={30} $mt={14} $pl={23.5}>
              <Glyph $size={19} $bold><T w={10.5}>B</T></Glyph><Gap $w={27.5} />
              <Glyph $size={22} $serif><T w={7}>I</T></Glyph><Gap $w={24.5} />
              <svg width="13" height="18" fill="none" stroke={S}><path d="M1.8 0V9C1.8 14.5 10.8 14.5 10.8 9V0" strokeWidth="1.8" /><path d="M0 17H12.8" strokeWidth="1.5" /></svg>
              <Gap $w={15.5} /><Chevron /><Gap $w={13.5} /><Rule /><Gap $w={11} />
              <BordersIcon /><Gap $w={10} /><Chevron /><Gap $w={15} /><Rule /><Gap $w={10} />
              <FillIcon /><Gap $w={9.5} /><Chevron /><Gap $w={15} />
              <FontColorIcon /><Gap $w={9.5} /><Chevron />
            </ToolRow>
          </Stack>
        </GroupBody>
        <GroupFoot $pl={142.5}><T w={35}>Font</T><Launcher /></GroupFoot>
      </Group>
      <Group $w={415.5}>
        <GroupBody>
          <Stack>
            <ToolRow $h={34} $mt={11} $pl={17.5}>
              <Lines rows={[[0, 0, 21.5], [6.5, 3, 18.5], [13, 0, 21.5]]} /><Gap $w={14} />
              <Lines rows={[[4, 0, 21.5], [10.5, 3, 18.5], [17, 0, 21.5]]} /><Gap $w={7} />
              <Pressed><Lines rows={[[4.5, 0, 21.5], [10.5, 3.5, 18], [16.7, 0, 21.5]]} /></Pressed><Gap $w={6} />
              <Rule /><Gap $w={10} /><OrientIcon /><Gap $w={5.5} /><Chevron />
            </ToolRow>
            <ToolRow $h={30} $mt={14} $pl={17.5}>
              <Lines rows={[[1.5, 0, 21.5], [7.5, 0, 15], [13.5, 0, 21.5], [19.7, 0, 15]]} /><Gap $w={14} />
              <Lines rows={[[1.5, 0, 21.5], [7.5, 3, 18.5], [13.5, 0, 21.5], [19.7, 3, 18.5]]} /><Gap $w={13.5} />
              <Lines rows={[[1.5, 0, 21.5], [7.5, 6.5, 21.5], [13.5, 0, 21.5], [19.7, 6.5, 21.5]]} /><Gap $w={12} />
              <Rule /><Gap $w={11} /><IndentIcon /><Gap $w={14} /><IndentIcon inc /><Gap $w={12} />
            </ToolRow>
          </Stack>
          <ToolRow $h={86} $mt={9} $pl={0}><Rule $h={86} /></ToolRow>
          <Stack>
            <ToolRow $h={34} $mt={11} $pl={13}><WrapIcon /><Gap $w={4} /><T w={77}>Wrap Text</T></ToolRow>
            <ToolRow $h={30} $mt={14} $pl={10}><MergeIcon /><Gap $w={7} /><T w={125.5}>Merge & Center</T><Gap $w={15.5} /><Chevron /></ToolRow>
          </Stack>
        </GroupBody>
        <GroupFoot $pl={157}><T w={78}>Alignment</T><Launcher /></GroupFoot>
      </Group>
      <Stack>
        <ToolRow $h={34} $mt={15} $pl={13}><Picker $w={80}><T w={60}>General</T></Picker></ToolRow>
        <ToolRow $h={30} $mt={14} $pl={22.5}><Glyph $size={24}><T w={11}>$</T></Glyph></ToolRow>
      </Stack>
    </Ribbon>
    <FormulaRow>
      <FormulaBox $w={152.5} $pl={10}>
        <T w={23.5}>A1</T><Gap $w={95.5} />
        <svg width="12" height="7"><path d="M0 0H12L6 6.6Z" fill="#fff" /></svg>
      </FormulaBox>
      <Dots>
        <svg width="4" height="18" fill="#f0f0f0"><rect width="3" height="3" /><rect y="6.5" width="3" height="3" /><rect y="13" width="3" height="3" /></svg>
      </Dots>
      <FormulaBox $w={164} $pl={18.5}>
        <svg width="17" height="15"><path d="M1 1L16 14M16 1L1 14" stroke="#707070" strokeWidth="2.6" /></svg><Gap $w={36} />
        <svg width="19" height="16"><path d="M1 9L6.5 14L18 1" fill="none" stroke="#707070" strokeWidth="3.4" /></svg><Gap $w={34} />
        <Fx>f<small>x</small></Fx>
      </FormulaBox>
      <Gap $w={4} />
      <FormulaBox $w={700} $pl={17}><T w={93.5}>FirstName</T></FormulaBox>
    </FormulaRow>
    <Sheet>
      <SheetRow $head>
        <Corner><svg width="17" height="17"><path d="M17 0V17H0Z" fill="#6a6a6a" /></svg></Corner>
        {"ABCDEFGHIJK".split("").map((c) => <ColHead key={c}>{c}</ColHead>)}
      </SheetRow>
      {SHEET_ROWS.map((row, r) => (
        <SheetRow key={r}>
          <RowHead>{r < 5 ? r + 1 : ""}</RowHead>
          {Array.from({ length: 11 }, (_, c) => (
            <SheetCell key={c} $right={r > 0 && c > 6} $spill={r === 0 && c === 9}>
              {row[c] && <T w={row[c][1]}>{row[c][0]}</T>}
            </SheetCell>
          ))}
        </SheetRow>
      ))}
    </Sheet>
  </Excel>
);

export default function App() {
  return (
    <Page>
      <Global />
      <ControlPanel />
      <MiddleRow>
        <CroppedPanel />
        <SideColumn>
          <DesktopFile />
          <Caption><T w={497}>(viewing/verifying the flat file below:)</T></Caption>
        </SideColumn>
      </MiddleRow>
      <Spreadsheet />
    </Page>
  );
}
